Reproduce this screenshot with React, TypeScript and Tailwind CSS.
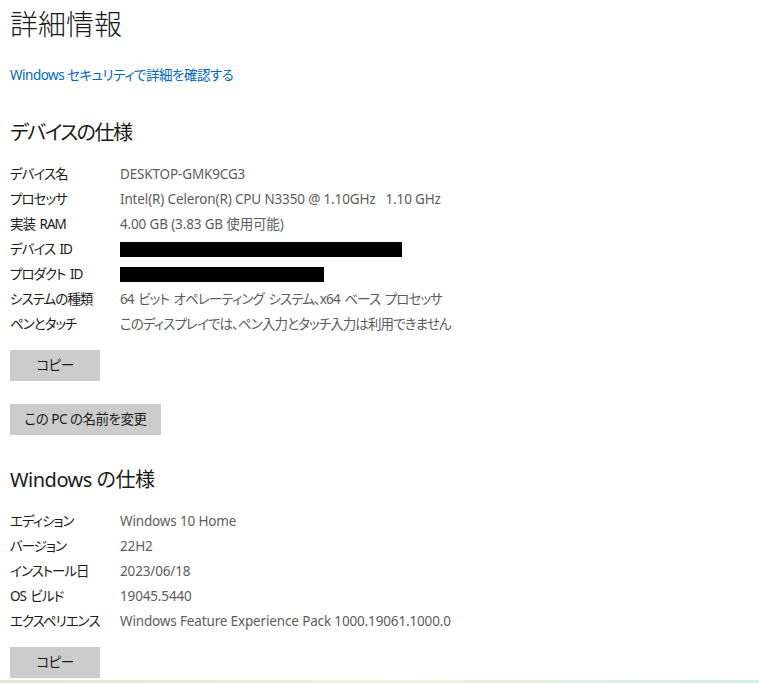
const FONT = "[font-family:'Noto_Sans','Noto_Sans_CJK_JP',sans-serif] [font-feature-settings:'palt']";

type Row = { label: string; value?: string; redact?: number; jp?: boolean };

const deviceRows: Row[] = [
	{ label: "デバイス名", value: "DESKTOP-GMK9CG3" },
	{ label: "プロセッサ", value: "Intel(R) Celeron(R) CPU N3350 @ 1.10GHz\u00a0\u00a0\u00a01.10 GHz" },
	{ label: "実装 RAM", value: "4.00 GB (3.83 GB 使用可能)" },
	{ label: "デバイス ID", redact: 282 },
	{ label: "プロダクト ID", redact: 204 },
	{ label: "システムの種類", value: "64 ビット オペレーティング システム、x64 ベース プロセッサ", jp: true },
	{ label: "ペンとタッチ", value: "このディスプレイでは、ペン入力とタッチ入力は利用できません", jp: true },
];

const windowsRows: Row[] = [
	{ label: "エディション", value: "Windows 10 Home" },
	{ label: "バージョン", value: "22H2" },
	{ label: "インストール日", value: "2023/06/18" },
	{ label: "OS ビルド", value: "19045.5440" },
	{ label: "エクスペリエンス", value: "Windows Feature Experience Pack 1000.19061.1000.0" },
];

function SpecTable({ rows }: { rows: Row[] }) {
	return (
		<div className="flex flex-col">
			{rows.map((row) => (
				<div key={row.label} className="flex h-[25px] items-center text-[13.5px]">
					<span className="w-[110px] shrink-0 tracking-[-1px] whitespace-nowrap text-[#1a1a1a] [word-spacing:2px]">{row.label}</span>
					{row.redact ? (
						<span className="block h-[15px] bg-black" style={{ width: row.redact }} />
					) : (
						<span
							className={
								row.jp
									? "whitespace-nowrap tracking-[-0.9px] text-[#5d5d5d] [word-spacing:2px]"
									: "whitespace-nowrap tracking-[-0.15px] text-[#5d5d5d]"
							}
						>
							{row.value}
						</span>
					)}
				</div>
			))}
		</div>
	);
}

function GrayButton({ children, width }: { children: React.ReactNode; width: string }) {
	return (
		<button
			type="button"
			className={`h-[31px] ${width} bg-[#cccccc] text-[13.5px] tracking-[-0.5px] text-[#1a1a1a]`}
		>
			{children}
		</button>
	);
}

export default function App() {
	return (
		<div className={`relative h-[683px] w-[759px] overflow-hidden bg-white ${FONT}`}>
			<div className="flex flex-col px-[10px]">
				<h1 className="mt-[5px] h-[38px] text-[28px] leading-[38px] font-light text-[#1a1a1a]">詳細情報</h1>
				<a href="#" className="mt-[20px] text-[13.5px] leading-[24px] tracking-[-0.5px] text-[#0067c0]">
					Windows セキュリティで詳細を確認する
				</a>

				<h2 className="mt-[31px] text-[20px] leading-[30px] tracking-[-1.5px] text-[#1a1a1a]">デバイスの仕様</h2>
				<div className="mt-[14px]">
					<SpecTable rows={deviceRows} />
				</div>

				<div className="mt-[13px]">
					<GrayButton width="w-[90px]">コピー</GrayButton>
				</div>
				<div className="mt-[23px]">
					<GrayButton width="w-[151px]">この PC の名前を変更</GrayButton>
				</div>

				<h2 className="mt-[30px] text-[20px] leading-[30px] tracking-[-0.5px] text-[#1a1a1a]">Windows の仕様</h2>
				<div className="mt-[14px]">
					<SpecTable rows={windowsRows} />
				</div>

				<div className="mt-[13px]">
					<GrayButton width="w-[90px]">コピー</GrayButton>
				</div>
			</div>
			<div className="absolute bottom-0 left-0 h-[3px] w-full bg-gradient-to-r from-[#dfe8c8] via-[#f3f0da] to-[#cfeeea]" />
		</div>
	);
}
